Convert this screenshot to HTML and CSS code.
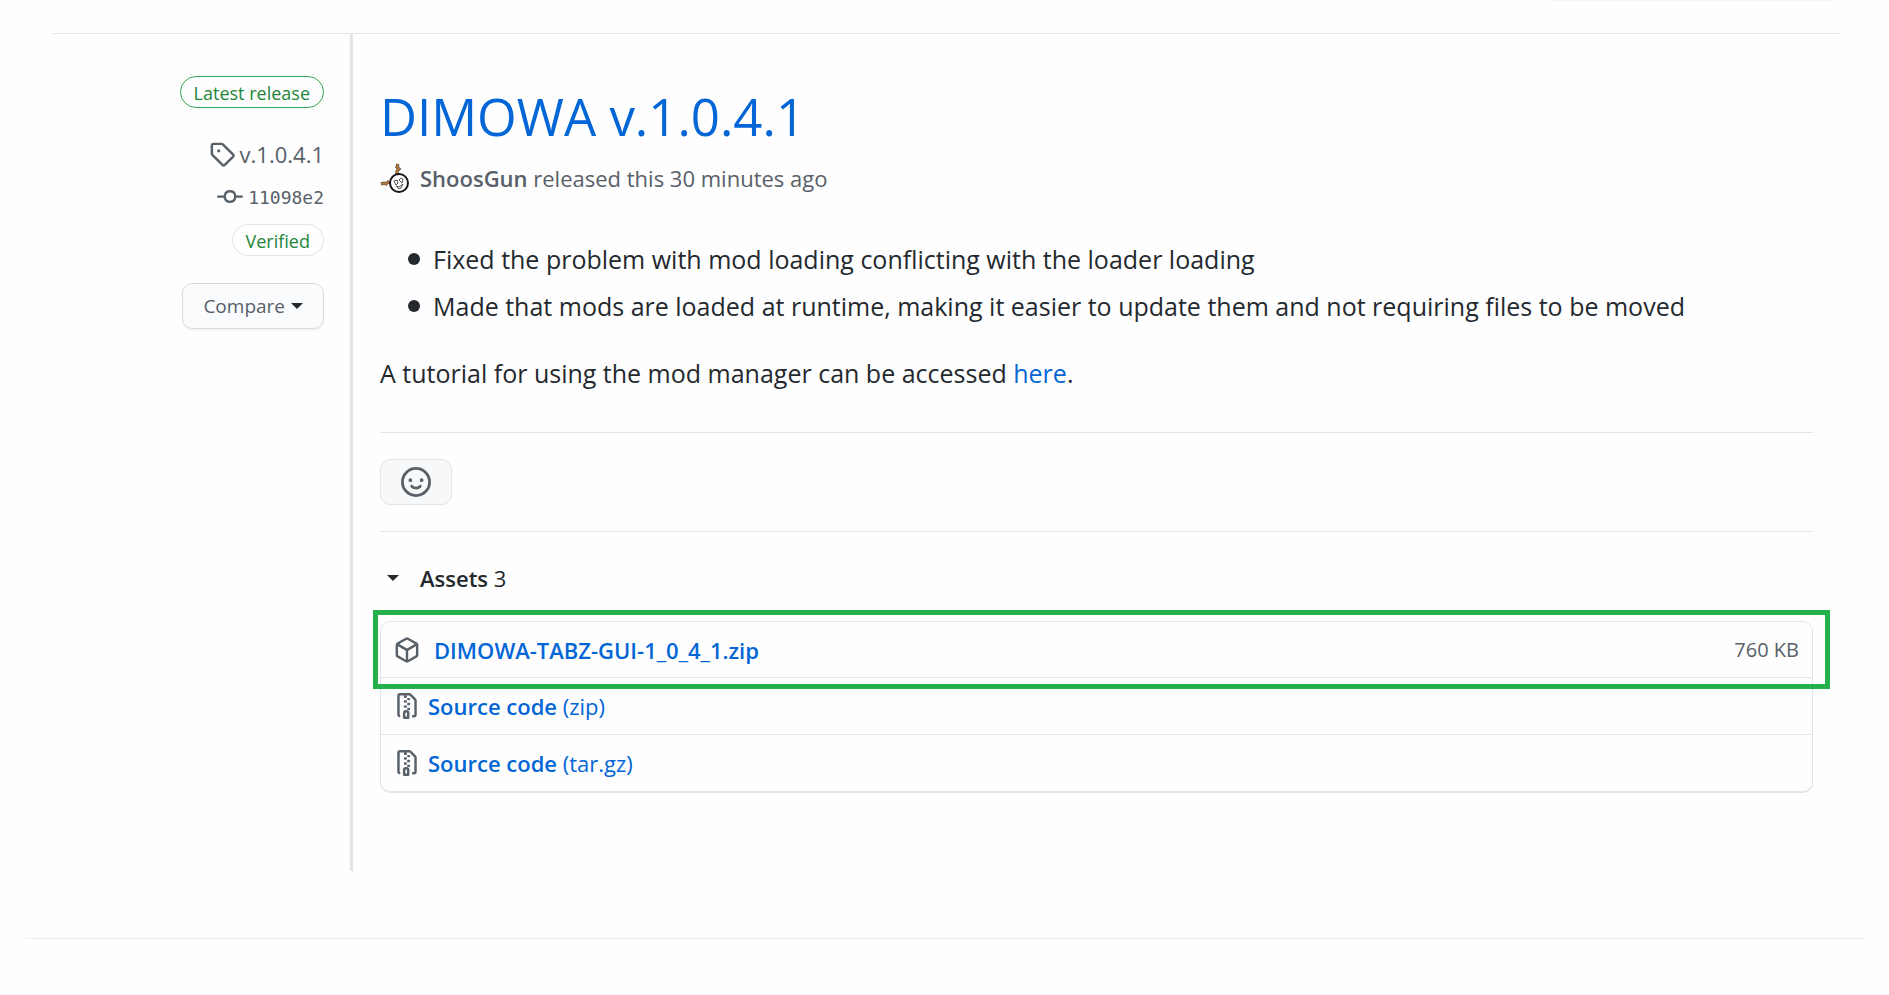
FILE: index.html
```html
<!DOCTYPE html>
<html lang="en">
<head>
<meta charset="utf-8">
<meta name="viewport" content="width=device-width, initial-scale=1">
<title>Release DIMOWA v.1.0.4.1</title>
<link rel="stylesheet" href="styles.css">
</head>
<body>
<svg class="sprite" aria-hidden="true">
  <symbol id="file-zip" viewBox="0 0 16 16"><path fill-rule="evenodd" d="M3.5 1.75a.25.25 0 01.25-.25h3a.75.75 0 000 1.5h.5a.75.75 0 000-1.5h2.086a.25.25 0 01.177.073l2.914 2.914a.25.25 0 01.073.177v8.586a.25.25 0 01-.25.25h-.5a.75.75 0 000 1.5h.5A1.75 1.75 0 0014 13.25V4.664c0-.464-.184-.909-.513-1.237L10.573.513A1.75 1.75 0 009.336 0H3.75A1.75 1.75 0 002 1.75v11.5c0 .649.353 1.214.874 1.515a.75.75 0 10.752-1.298.25.25 0 01-.126-.217V1.75zM8.75 3a.75.75 0 000 1.5h.5a.75.75 0 000-1.5h-.5zM6 5.25a.75.75 0 01.75-.75h.5a.75.75 0 010 1.5h-.5A.75.75 0 016 5.25zm2 1.5A.75.75 0 018.75 6h.5a.75.75 0 010 1.5h-.5A.75.75 0 018 6.75zm-1.25.75a.75.75 0 000 1.5h.5a.75.75 0 000-1.5h-.5zM8 9.75A.75.75 0 018.75 9h.5a.75.75 0 010 1.5h-.5A.75.75 0 018 9.75zm-.75.75a1.75 1.75 0 00-1.75 1.75v3c0 .414.336.75.75.75h2.5a.75.75 0 00.75-.75v-3a1.75 1.75 0 00-1.75-1.75h-.5zM7 12.25a.25.25 0 01.25-.25h.5a.25.25 0 01.25.25v2.25H7v-2.25z"/></symbol>
</svg>
<div class="toolbar-edge"></div>
<main class="release">
  <aside class="meta">
    <a class="pill pill-latest" href="#latest">Latest release</a>
    <a class="meta-link" href="#tag">
      <svg class="icon" viewBox="0 0 16 16" aria-hidden="true"><path fill-rule="evenodd" d="M2.5 7.775V2.75a.25.25 0 01.25-.25h5.025a.25.25 0 01.177.073l6.25 6.25a.25.25 0 010 .354l-5.025 5.025a.25.25 0 01-.354 0l-6.25-6.25a.25.25 0 01-.073-.177zm-1.5 0V2.75C1 1.784 1.784 1 2.75 1h5.025c.464 0 .91.184 1.238.513l6.25 6.25a1.75 1.75 0 010 2.474l-5.026 5.026a1.75 1.75 0 01-2.474 0l-6.25-6.25A1.75 1.75 0 011 7.775zM6 5a1 1 0 100 2 1 1 0 000-2z"/></svg>
      <span>v.1.0.4.1</span>
    </a>
    <a class="meta-link commit" href="#commit">
      <svg class="icon" viewBox="0 0 16 16" aria-hidden="true"><path fill-rule="evenodd" d="M10.5 7.75a2.5 2.5 0 11-5 0 2.5 2.5 0 015 0zm1.43.75a4.002 4.002 0 01-7.86 0H.75a.75.75 0 110-1.5h3.32a4.001 4.001 0 017.86 0h3.32a.75.75 0 110 1.5h-3.32z"/></svg>
      <code>11098e2</code>
    </a>
    <button class="pill pill-verified" type="button">Verified</button>
    <button class="compare" type="button">Compare <span class="caret"></span></button>
  </aside>
  <article class="body">
    <h1 class="title"><a href="#release">DIMOWA v.1.0.4.1</a></h1>
    <p class="byline">
      <svg class="avatar" viewBox="0 0 30 32" aria-hidden="true">
        <path class="limb-edge" d="M17 12v-3l2-2-2-2 1-3M10 21l-2-1-2 2-2-1-3 1"/>
        <path class="limb" d="M17 12v-3l2-2-2-2 1-3M10 21l-2-1-2 2-2-1-3 1"/>
        <ellipse class="head" cx="19" cy="21" rx="9" ry="9"/>
        <path class="face" d="M14 19l3-1 1 3-2 2zM19 18l2-2 2 1-1 4zM16 24l3 1 4-3-2 4-2 1z"/>
      </svg>
      <span><a href="#author">ShoosGun</a> released this 30 minutes ago</span>
    </p>
    <div class="notes">
      <ul>
        <li>Fixed the problem with mod loading conflicting with the loader loading</li>
        <li>Made that mods are loaded at runtime, making it easier to update them and not requiring files to be moved</li>
      </ul>
      <p>A tutorial for using the mod manager can be accessed <a href="#tutorial">here</a>.</p>
    </div>
    <div class="reactions">
      <button class="react" type="button" aria-label="Add your reaction">
        <svg viewBox="0 0 16 16" aria-hidden="true"><path fill-rule="evenodd" d="M1.5 8a6.5 6.5 0 1113 0 6.5 6.5 0 01-13 0zM8 0a8 8 0 100 16A8 8 0 008 0zM5 8a1 1 0 100-2 1 1 0 000 2zm7-1a1 1 0 11-2 0 1 1 0 012 0zM5.32 9.636a.75.75 0 011.038.175l.007.009c.103.118.22.222.35.31.264.178.683.37 1.285.37.602 0 1.02-.192 1.285-.371.13-.088.247-.192.35-.31l.007-.008a.75.75 0 111.222.87l-.614-.431c.614.43.614.431.613.431v.001l-.001.002-.002.003-.005.007-.014.019a1.984 1.984 0 01-.184.213c-.16.166-.338.316-.53.445-.63.418-1.37.638-2.127.629-.946 0-1.652-.308-2.126-.63a3.331 3.331 0 01-.715-.657l-.014-.02-.005-.006-.002-.003v-.002h-.001l.613-.432-.614.43a.75.75 0 01.183-1.044h.001z"/></svg>
      </button>
    </div>
    <details class="assets" open>
      <summary><span class="caret"></span><span><b>Assets</b> 3</span></summary>
      <ul class="files">
        <li class="highlight">
          <svg class="icon" viewBox="0 0 16 16" aria-hidden="true"><path fill-rule="evenodd" d="M8.878.392a1.75 1.75 0 00-1.756 0l-5.25 3.045A1.75 1.75 0 001 4.951v6.098c0 .624.332 1.2.872 1.514l5.25 3.045a1.75 1.75 0 001.756 0l5.25-3.045c.54-.313.872-.89.872-1.514V4.951c0-.624-.332-1.2-.872-1.514L8.878.392zM7.875 1.69a.25.25 0 01.25 0l4.63 2.685L8 7.133 3.245 4.375l4.63-2.685zM2.5 5.677v5.372c0 .09.047.171.125.216l4.625 2.683V8.432L2.5 5.677zm6.25 8.271l4.625-2.683a.25.25 0 00.125-.216V5.677L8.75 8.432v5.516z"/></svg>
          <a href="#gui-zip"><b>DIMOWA-TABZ-GUI-1_0_4_1.zip</b></a>
          <small>760 KB</small>
        </li>
        <li>
          <svg class="icon" aria-hidden="true"><use href="#file-zip"/></svg>
          <a href="#source-zip"><b>Source code</b> (zip)</a>
        </li>
        <li>
          <svg class="icon" aria-hidden="true"><use href="#file-zip"/></svg>
          <a href="#source-tar"><b>Source code</b> (tar.gz)</a>
        </li>
      </ul>
    </details>
  </article>
</main>
<footer class="footer"></footer>
</body>
</html>
```
FILE: styles.css
```css
* {
  box-sizing: border-box;
}

body {
  margin: 0;
  background: #fefefe;
  color: #24292e;
  font-family: "Open Sans", "Noto Sans", sans-serif;
  font-size: 22px;
  line-height: 32px;
}

a {
  color: #0366d6;
  text-decoration: none;
}

b {
  font-weight: 600;
}

ul {
  margin: 0;
  padding: 0;
  list-style: none;
}

button {
  font: inherit;
  cursor: pointer;
}

.sprite {
  display: none;
}

.icon {
  flex: none;
  width: 26px;
  height: 26px;
  fill: #586069;
}

.caret {
  flex: none;
  border: 6px solid transparent;
  border-top-color: #24292e;
  border-bottom: 0;
}

.toolbar-edge {
  width: 280px;
  height: 1px;
  margin: 0 56px 32px auto;
  background: #f5f5f5;
}

.release {
  display: grid;
  grid-template-columns: 298px 1fr;
  margin: 0 49px 0 52px;
  border-top: 1px solid #e1e4e8;
}

.meta {
  display: flex;
  flex-direction: column;
  align-items: flex-end;
  padding: 42px 26px 0 0;
}

.pill {
  height: 32px;
  padding: 0 13px;
  border: 1px solid #e1e4e8;
  border-radius: 16px;
  background: transparent;
  color: #22863a;
  font-size: 18px;
  line-height: 32px;
}

.pill-latest {
  border-color: #34a853;
  margin-bottom: 30px;
}

.pill-verified {
  margin-bottom: 27px;
}

.meta-link {
  display: flex;
  align-items: center;
  gap: 5px;
  height: 32px;
  margin-bottom: 11px;
  color: #586069;
}

.commit code {
  font: 18px "DejaVu Sans Mono", monospace;
}

.compare {
  display: flex;
  align-items: center;
  gap: 6px;
  height: 46px;
  padding: 0 20px;
  border: 1px solid #d8dbde;
  border-radius: 10px;
  background: #fafbfc;
  box-shadow: 0 2px 0 #f4f5f6;
  color: #586069;
  font-size: 19px;
}

.body {
  padding: 48px 27px 79px 27px;
  border-left: 3px solid #e1e4e8;
}

.title {
  margin: 0;
  font-size: 51px;
  font-weight: 400;
  line-height: 68px;
}

.byline {
  display: flex;
  align-items: center;
  gap: 10px;
  margin: 12px 0 45px;
  color: #586069;
}

.byline a {
  color: #586069;
  font-weight: 600;
}

.avatar {
  flex: none;
  width: 30px;
  height: 32px;
  fill: none;
}

.limb-edge {
  stroke: #33261c;
  stroke-width: 3;
}

.limb {
  stroke: #b47a42;
  stroke-width: 2;
}

.head {
  fill: #fff;
  stroke: #15171a;
  stroke-width: 2;
}

.face {
  stroke: #555;
}

.notes {
  padding-bottom: 39px;
  border-bottom: 1px solid #e1e4e8;
  font-size: 25px;
  line-height: 40px;
}

.notes ul {
  padding-left: 28px;
}

.notes li {
  display: flex;
  gap: 13px;
}

.notes li::before {
  content: "";
  flex: none;
  width: 12px;
  height: 12px;
  margin-top: 14px;
  border-radius: 50%;
  background: #24292e;
}

.notes li + li {
  margin-top: 7px;
}

.notes p {
  margin: 27px 0 0;
}

.reactions {
  padding: 26px 0;
  border-bottom: 1px solid #e1e4e8;
}

.react {
  display: flex;
  align-items: center;
  justify-content: center;
  width: 72px;
  height: 46px;
  border: 1px solid #e1e4e8;
  border-radius: 10px;
  background: #f6f8fa;
}

.react svg {
  flex: none;
  width: 30px;
  height: 30px;
  fill: #586069;
}

.assets summary {
  display: flex;
  align-items: center;
  gap: 21px;
  padding: 30px 7px 27px;
  cursor: pointer;
}

.files {
  border: 1px solid #e1e4e8;
  border-radius: 10px;
  box-shadow: 0 1px 0 #e1e4e8;
}

.files li {
  display: flex;
  align-items: center;
  gap: 8px;
  height: 55px;
  padding: 0 13px;
}

.files li + li {
  height: 57px;
  border-top: 1px solid #e1e4e8;
}

.files small {
  margin-left: auto;
  color: #586069;
  font-size: 20px;
}

.files .highlight {
  position: relative;
  gap: 14px;
}

.highlight::after {
  content: "";
  position: absolute;
  inset: -12px -18px -12px -8px;
  border: 5px solid #24b14c;
  pointer-events: none;
}

.footer {
  margin: 67px 23px 0 26px;
  border-top: 1px solid #eaecef;
}
```
